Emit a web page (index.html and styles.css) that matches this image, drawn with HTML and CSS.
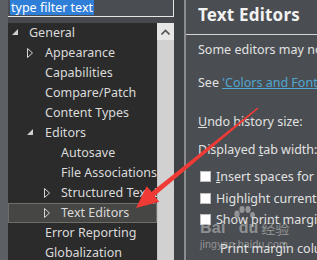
FILE: index.html
```html
<!DOCTYPE html>
<html>
<head>
<meta charset="utf-8">
<link rel="stylesheet" href="styles.css">
</head>
<body>
<div class="app">
  <div class="strip"></div>
  <div class="left">
    <div class="filter"><span class="sel">type filter text</span></div>
    <div class="tree-wrap">
      <ul class="tree">
        <li class="row l0"><span class="exp"><svg width="8" height="8" viewBox="0 0 8 8"><polygon points="6,0 6,6 0,6" fill="#cfcfcf"/><rect x="8" y="3" width="1" height="1" fill="#999"/></svg></span>General</li>
        <li class="row l1"><span class="exp"><svg width="8" height="10" viewBox="0 0 8 10"><polygon points="0.5,0.5 5.5,5 0.5,9.5" fill="none" stroke="#d6d6d6" stroke-width="1"/></svg></span>Appearance</li>
        <li class="row l1"><span class="exp"></span>Capabilities</li>
        <li class="row l1"><span class="exp"></span>Compare/Patch</li>
        <li class="row l1"><span class="exp"></span>Content Types</li>
        <li class="row l1"><span class="exp"><svg width="8" height="8" viewBox="0 0 8 8"><polygon points="6,0 6,6 0,6" fill="#cfcfcf"/></svg></span>Editors</li>
        <li class="row l2"><span class="exp"></span>Autosave</li>
        <li class="row l2"><span class="exp"></span>File Associations</li>
        <li class="row l2"><span class="exp"><svg width="8" height="10" viewBox="0 0 8 10"><polygon points="0.5,0.5 5.5,5 0.5,9.5" fill="none" stroke="#d6d6d6" stroke-width="1"/></svg></span>Structured Text Editors</li>
        <li class="row l2 selected"><span class="exp"><svg width="8" height="10" viewBox="0 0 8 10"><polygon points="0.5,0.5 5.5,5 0.5,9.5" fill="none" stroke="#d6d6d6" stroke-width="1"/></svg></span>Text Editors</li>
        <li class="row l1"><span class="exp"></span>Error Reporting</li>
        <li class="row l1"><span class="exp"></span>Globalization</li>
      </ul>
      <div class="scrollbar">
        <div class="sb-btn"><svg width="9" height="6" viewBox="0 0 9 6"><polyline points="0.5,5.5 4.5,1.5 8.5,5.5" fill="none" stroke="#555" stroke-width="1.6"/></svg></div>
        <div class="sb-track"></div>
      </div>
    </div>
  </div>
  <div class="gap"></div>
  <div class="sash"></div>
  <div class="right">
    <div class="title">Text Editors</div>
    <div class="content">
      <p class="t1">Some editors may not honor all of these settings.</p>
      <p class="t2">See <a class="link">'Colors and Fonts'</a> to configure the font.</p>
      <p class="t3"><u>U</u>ndo history size:</p>
      <p class="t4">Displayed <u>t</u>ab width:</p>
      <div class="cb-row r1"><span class="cb"></span><span><u>I</u>nsert spaces for tabs</span></div>
      <div class="cb-row"><span class="cb"></span><span>Highlight current line</span></div>
      <div class="cb-row"><span class="cb"></span><span>Show print margin</span></div>
      <p class="t5">Print margin column:</p>
    </div>
  </div>
  <div class="watermark">
    <svg class="paw" width="22" height="16" viewBox="0 0 22 16"><ellipse cx="4" cy="8" rx="2.6" ry="3.4"/><ellipse cx="9" cy="3.5" rx="2.6" ry="3.4"/><ellipse cx="15" cy="3.5" rx="2.6" ry="3.4"/><ellipse cx="19.5" cy="9" rx="2.4" ry="3"/></svg>
    <div class="wm-top"><span class="wm-bai">Bai</span><span class="wm-du">du</span><span class="wm-cn">经验</span></div>
    <div class="wm-url">jingyan.baidu.com</div>
  </div>
  <svg class="arrow" width="317" height="260" viewBox="0 0 317 260"><polygon points="136,208 146.7,186.3 151.4,192.1 257.5,107.4 258.5,108.6 154.6,195.9 159.3,201.7" fill="#ef3a35"/></svg>
</div>
</body>
</html>
```

FILE: styles.css
```css
* { box-sizing: border-box; }
html, body { margin: 0; padding: 0; }
body {
  width: 317px;
  height: 260px;
  overflow: hidden;
  background: #47494d;
  font-family: "Noto Sans", "Open Sans", sans-serif;
  font-size: 12.5px;
  color: #dcdcdc;
}
.app {
  position: relative;
  display: flex;
  width: 317px;
  height: 260px;
}
.strip { width: 8px; flex: none; background: #5c5f63; }
.left {
  width: 166px;
  flex: none;
  display: flex;
  flex-direction: column;
  background: #46494d;
}
.filter {
  height: 17px;
  flex: none;
  border-bottom: 1px solid #e6e6e6;
  border-right: 1px solid #e6e6e6;
  padding-left: 2px;
  background: #4a4d51;
  display: flex;
  align-items: flex-start;
}
.sel {
  background: #2f7ed8;
  color: #fff;
  font-size: 12.5px;
  line-height: 15px;
  height: 15px;
  padding: 0 1px;
  white-space: nowrap;
}
.tree-wrap {
  margin-top: 6px;
  flex: 1;
  display: flex;
  min-height: 0;
}
.tree {
  list-style: none;
  margin: 0;
  padding: 0;
  width: 149px;
  flex: none;
  background: #2b2b2b;
  overflow: hidden;
}
.row {
  height: 20px;
  line-height: 20px;
  display: flex;
  align-items: center;
  white-space: nowrap;
  overflow: hidden;
  color: #dadada;
}
.row.l0 { padding-left: 4px; }
.row.l1 { padding-left: 19px; }
.row.l2 { padding-left: 36px; }
.exp {
  width: 17px;
  flex: none;
  display: flex;
  align-items: center;
  height: 20px;
}
.row.l1 .exp { width: 18px; }
.row.selected {
  background: #464644;
  box-shadow: inset 0 0 0 1px #6f6f69;
}
.scrollbar {
  width: 17px;
  flex: none;
  display: flex;
  flex-direction: column;
  background: #d2d2d2;
}
.sb-btn {
  height: 17px;
  background: #e6e6e6;
  display: flex;
  align-items: center;
  justify-content: center;
}
.sb-track { flex: 1; background: #d1d1d1; border-left: 1px solid #c4c4c4; }
.gap { width: 10px; flex: none; background: #3f4245; }
.sash { width: 2px; flex: none; background: #8a8c8f; }
.right {
  flex: 1;
  min-width: 0;
  background: #4a4d51;
  display: flex;
  flex-direction: column;
  overflow: hidden;
}
.title {
  height: 35px;
  padding: 0 0 0 12px;
  font-size: 17px;
  font-weight: bold;
  line-height: 30px;
  color: #f2f2f2;
  border-bottom: 1px solid #d4d4d4;
  white-space: nowrap;
  letter-spacing: 0.2px;
}
.content {
  padding-left: 12px;
  display: flex;
  flex-direction: column;
  white-space: nowrap;
  color: #e2e2e2;
}
.content p { margin: 0; height: 18px; line-height: 18px; }
.content u { text-decoration: underline; }
.t1 { margin-top: 6px !important; }
.t2 { margin-top: 15px !important; }
.t3 { margin-top: 21px !important; }
.t4 { margin-top: 10px !important; }
.link { color: #4fa8d2; text-decoration: underline; }
.cb-row {
  height: 21.5px;
  display: flex;
  align-items: center;
  padding-left: 2px;
}
.cb-row.r1 { margin-top: 7px; }
.cb {
  width: 11px;
  height: 11px;
  background: #ffffff;
  border: 1px solid #bdbdbd;
  margin-right: 5px;
  flex: none;
}
.t5 { margin-top: 9px !important; padding-left: 22px; }
.watermark {
  position: absolute;
  left: 200px;
  top: 206px;
  width: 100px;
  color: rgba(255,255,255,0.4);
  pointer-events: none;
}
.paw {
  position: absolute;
  left: 33px;
  top: 0;
  fill: rgba(255,255,255,0.4);
}
.wm-top {
  display: flex;
  align-items: center;
  height: 14px;
  margin-top: 15px;
}
.wm-bai, .wm-du {
  font-family: "Liberation Sans", sans-serif;
  font-weight: bold;
  font-size: 16px;
  line-height: 14px;
}
.wm-bai { letter-spacing: 0.3px; }
.wm-du { margin-left: 13px; }
.wm-cn { font-family: "Noto Sans CJK SC", sans-serif; font-size: 14px; line-height: 14px; margin-left: 3px; }
.wm-url { font-family: "Liberation Sans", sans-serif; font-size: 10.5px; line-height: 12px; margin-top: 3px; letter-spacing: 0.2px; }
.arrow { position: absolute; left: 0; top: 0; pointer-events: none; }
```
